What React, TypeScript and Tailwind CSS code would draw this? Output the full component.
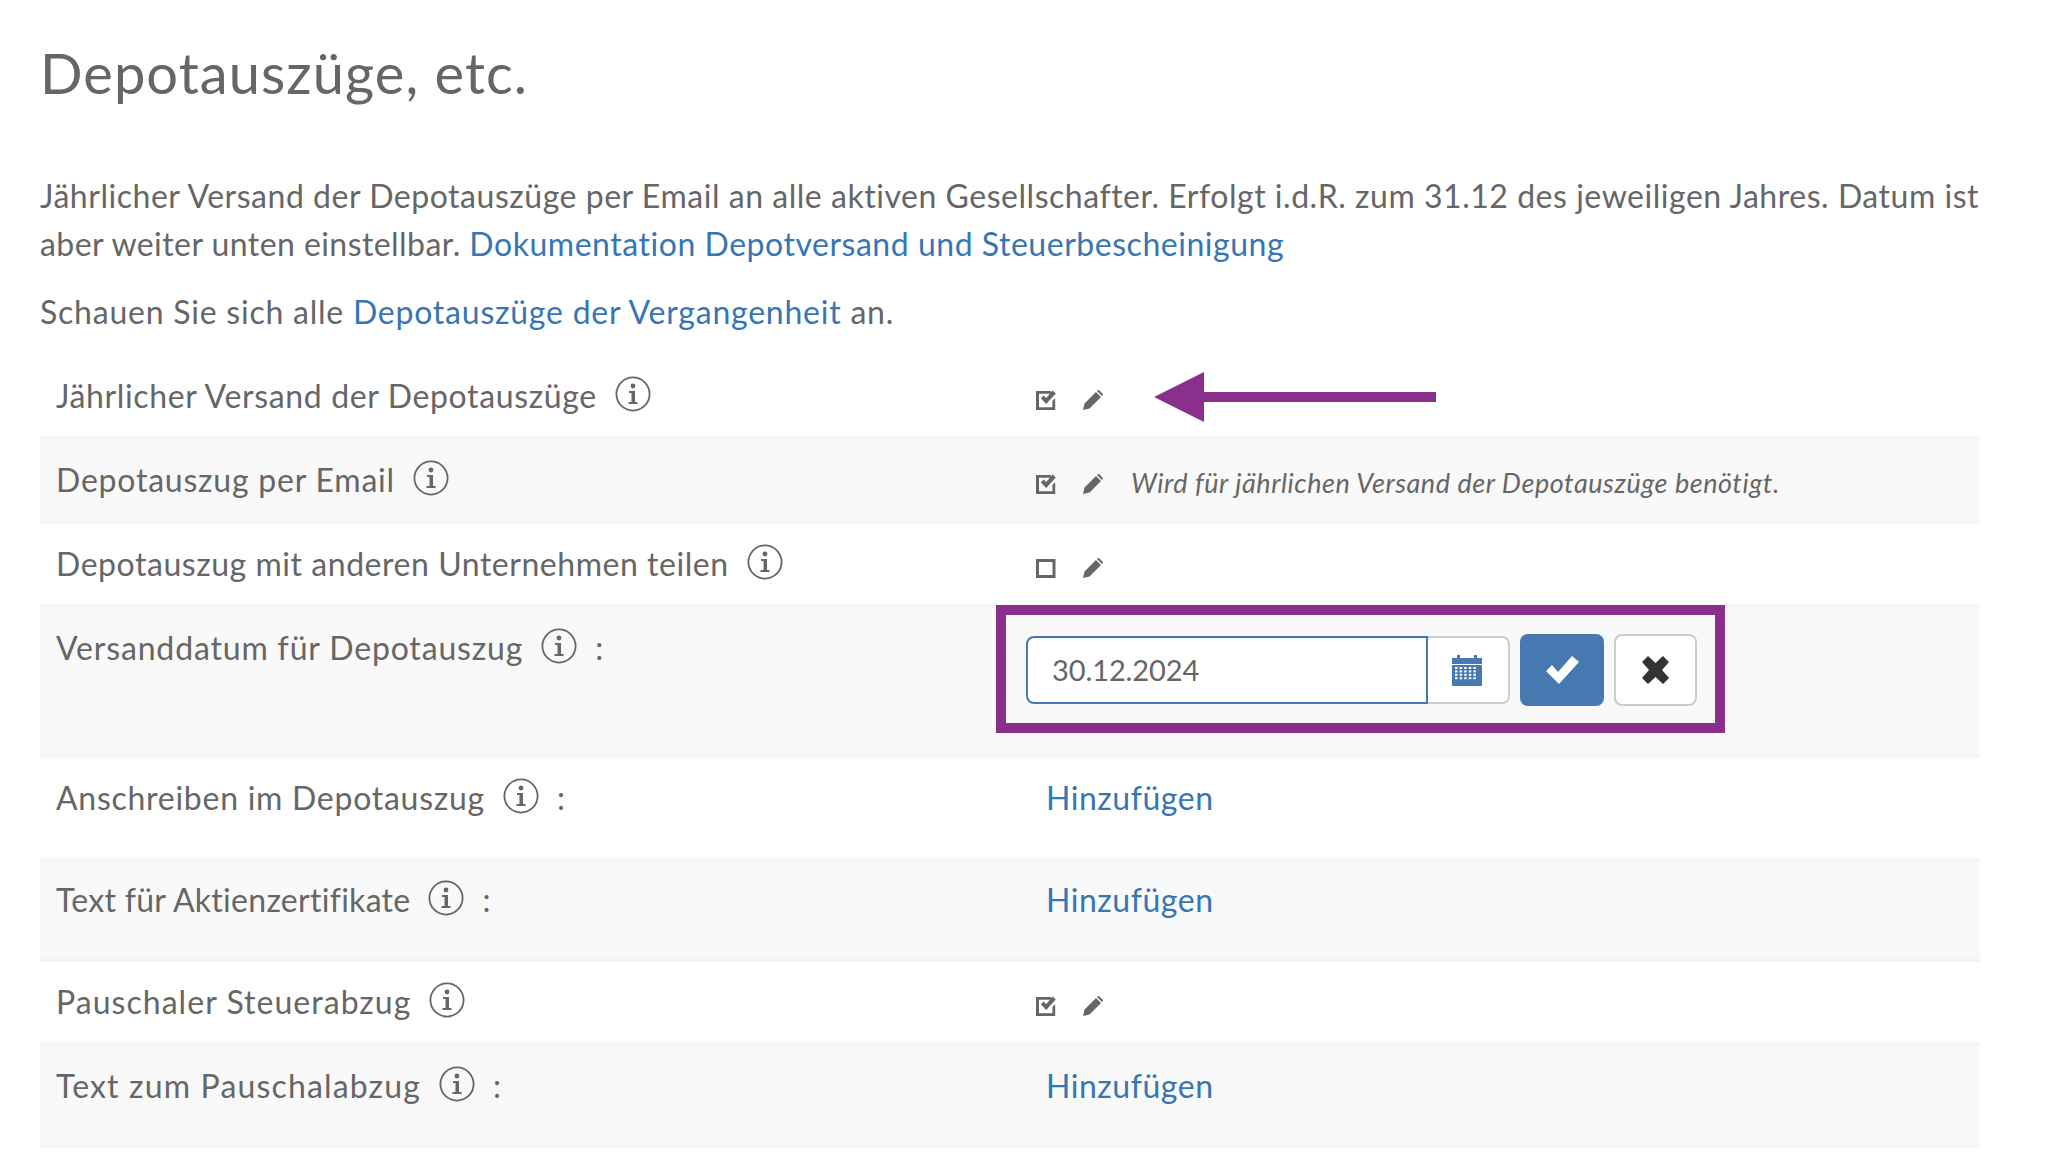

import React from "react";

function Info() {
  return (
    <svg width="36" height="36" viewBox="0 0 36 36" className="ml-[18px] shrink-0 relative -top-[2px]">
      <circle cx="18" cy="18" r="16.6" fill="none" stroke="#666" strokeWidth="1.8" />
      <circle cx="18" cy="10" r="2.4" fill="#666" />
      <path d="M14 15h6v11h2.5v2h-9v-2H16.5v-9H14z" fill="#666" />
    </svg>
  );
}
function Check() {
  return (
    <svg width="20" height="20" viewBox="0 0 20 20" className="shrink-0">
      <path d="M0 1h15v2.800H3v13.400h13.400V11L19.200 8.200V20H0z" fill="#666" />
      <path d="M4.8 8.200l2.800-2.800 2.600 2.700L16.600 0.600 19.800 3.600 10.200 14z" fill="#666" />
    </svg>
  );
}
function Unchecked() {
  return (
    <svg width="20" height="20" viewBox="0 0 20 20" className="shrink-0">
      <path d="M0 1h19.500v19H0zM3 4v13h13.500V4z" fill="#666" fillRule="evenodd" />
    </svg>
  );
}
function Pencil() {
  return (
    <svg width="20" height="20" viewBox="0 0 20 20" className="shrink-0">
      <path d="M0 20l1.500-6.500L13 2l5 5L6.500 18.500z M14.500 .5a1.500 1.500 0 0 1 2 0l3 3a1.500 1.500 0 0 1 0 2L19 6 14 1z" fill="#666" />
    </svg>
  );
}
function Calendar() {
  const cells = [];
  for (let r = 0; r < 4; r++) for (let c = 0; c < 5; c++) cells.push(<rect key={r + "-" + c} x={3 + c * 4.6} y={13 + r * 3.4} width="2.500" height="2" fill="#fff" />);
  return (
    <svg width="30" height="32" viewBox="0 0 30 32" className="-ml-[2px]">
      <path d="M0 4h5V1h3v3h14V1h3v3h5v6H0z" fill="#4679b0" />
      <rect x="0" y="11" width="30" height="21" rx="1" fill="#4679b0" />
      {cells}
    </svg>
  );
}
function Ok() {
  return (
    <svg width="33" height="28" viewBox="0 0 33 28">
      <path d="M0 15l6-6 6 7L26 0l7 6-20 22z" fill="#fff" />
    </svg>
  );
}
function Cross() {
  return (
    <svg width="27" height="28" viewBox="0 0 27 28">
      <path d="M0 6l6-6 7.500 7L21 0l6 6-7 8 7 8-6 6-7.500-7L6 28l-6-6 7-8z" fill="#333" />
    </svg>
  );
}

function Label({ text, colon, track }: { text: string; colon?: boolean; track: string }) {
  return (
    <div className="w-[1006px] shrink-0 pl-4 flex items-center h-12 text-[#666]">
      <span className={track}>{text}</span>
      <Info />
      {colon && <span className="ml-[18px]">:</span>}
    </div>
  );
}
function Toggle({ on, note }: { on: boolean; note?: string }) {
  return (
    <div className="-ml-[10px] flex items-center h-[55px]">
      {on ? <Check /> : <Unchecked />}
      <span className="ml-[27px]"><Pencil /></span>
      {note && <em className="ml-7 text-[27px] tracking-[0.55px] text-[#666] -translate-y-px">{note}</em>}
    </div>
  );
}
function Add() {
  return <a className="text-[#3776b3] h-12 flex items-center">Hinzufügen</a>;
}

export default function App() {
  return (
    <div className="w-[2070px] h-[1174px] overflow-hidden bg-white px-10 font-['Lato','Noto_Sans',sans-serif] text-[32px] leading-[48px] text-[#666] tracking-[0.53px]">
      <h1 className="pt-[38px] text-[56px] leading-[70px] text-[#666] font-normal tracking-[1.07px]">Depotauszüge, etc.</h1>
      <p className="mt-[64px]">
        Jährlicher Versand der Depotauszüge per Email an alle aktiven Gesellschafter. Erfolgt i.d.R. zum 31.12 des jeweiligen Jahres. Datum ist <span className="tracking-[0.44px]">aber weiter unten einstellbar.</span> <a className="text-[#3776b3]">Dokumentation Depotversand und Steuerbescheinigung</a>
      </p>
      <p className="mt-[20px] tracking-[0.77px]">
        Schauen Sie sich alle <a className="text-[#3776b3]">Depotauszüge der Vergangenheit</a> an.
      </p>

      <div className="mt-[20px] w-[1940px]">
        <div className="h-[84px] pt-4 flex items-start border-b-4 border-[#f5f5f5] relative">
          <Label text="Jährlicher Versand der Depotauszüge" track="tracking-[0.64px]" />
          <Toggle on />
          <svg width="284" height="50" viewBox="0 0 284 50" className="absolute left-[1114px] top-[16px]">
            <path d="M0 25L50 0v20h232v10H50v20z" fill="#8a2f8c" />
          </svg>
        </div>
        <div className="h-[84px] pt-4 flex items-start border-b-4 border-[#f5f5f5] bg-[#f9f9f9]">
          <Label text="Depotauszug per Email" track="tracking-[0.78px]" />
          <Toggle on note="Wird für jährlichen Versand der Depotauszüge benötigt." />
        </div>
        <div className="h-[84px] pt-4 flex items-start border-b-4 border-[#f5f5f5]">
          <Label text="Depotauszug mit anderen Unternehmen teilen" track="tracking-[0.54px]" />
          <Toggle on={false} />
        </div>
        <div className="h-[150px] flex items-start border-b-4 border-[#f5f5f5] bg-[#f9f9f9]">
          <div className="pt-4"><Label text="Versanddatum für Depotauszug" colon track="tracking-[0.84px]" /></div>
          <div className="-ml-[50px] mt-[-3px] w-[729px] h-[128px] border-[10px] border-[#8a2f8c] flex items-center pl-5 pt-[2px] gap-[10px]">
            <div className="flex h-[68px]">
              <div className="w-[402px] border-2 border-[#4679b0] bg-white rounded-l-lg pl-6 flex items-center text-[29px] tracking-[-0.1px]">30.12.2024</div>
              <div className="w-[82px] border-2 border-l-0 border-[#ccc] bg-white rounded-r-lg flex items-center justify-center"><Calendar /></div>
            </div>
            <div className="w-[84px] h-[72px] bg-[#4679b0] rounded-lg flex items-center justify-center"><Ok /></div>
            <div className="w-[83px] h-[72px] bg-white border-2 border-[#ccc] rounded-lg flex items-center justify-center"><Cross /></div>
          </div>
        </div>
        <div className="h-[104px] pt-4 flex items-start border-b-4 border-[#f5f5f5]">
          <Label text="Anschreiben im Depotauszug" colon track="tracking-[0.73px]" />
          <Add />
        </div>
        <div className="h-[100px] pt-[14px] flex items-start border-b-4 border-[#f5f5f5] bg-[#f9f9f9]">
          <Label text="Text für Aktienzertifikate" colon track="tracking-[0.28px]" />
          <Add />
        </div>
        <div className="h-[84px] pt-4 flex items-start border-b-4 border-[#f5f5f5]">
          <Label text="Pauschaler Steuerabzug" track="tracking-[1.04px]" />
          <Toggle on />
        </div>
        <div className="h-[102px] pt-4 flex items-start border-b-4 border-[#f5f5f5] bg-[#f9f9f9]">
          <Label text="Text zum Pauschalabzug" colon track="tracking-[1.16px]" />
          <Add />
        </div>
      </div>
    </div>
  );
}
